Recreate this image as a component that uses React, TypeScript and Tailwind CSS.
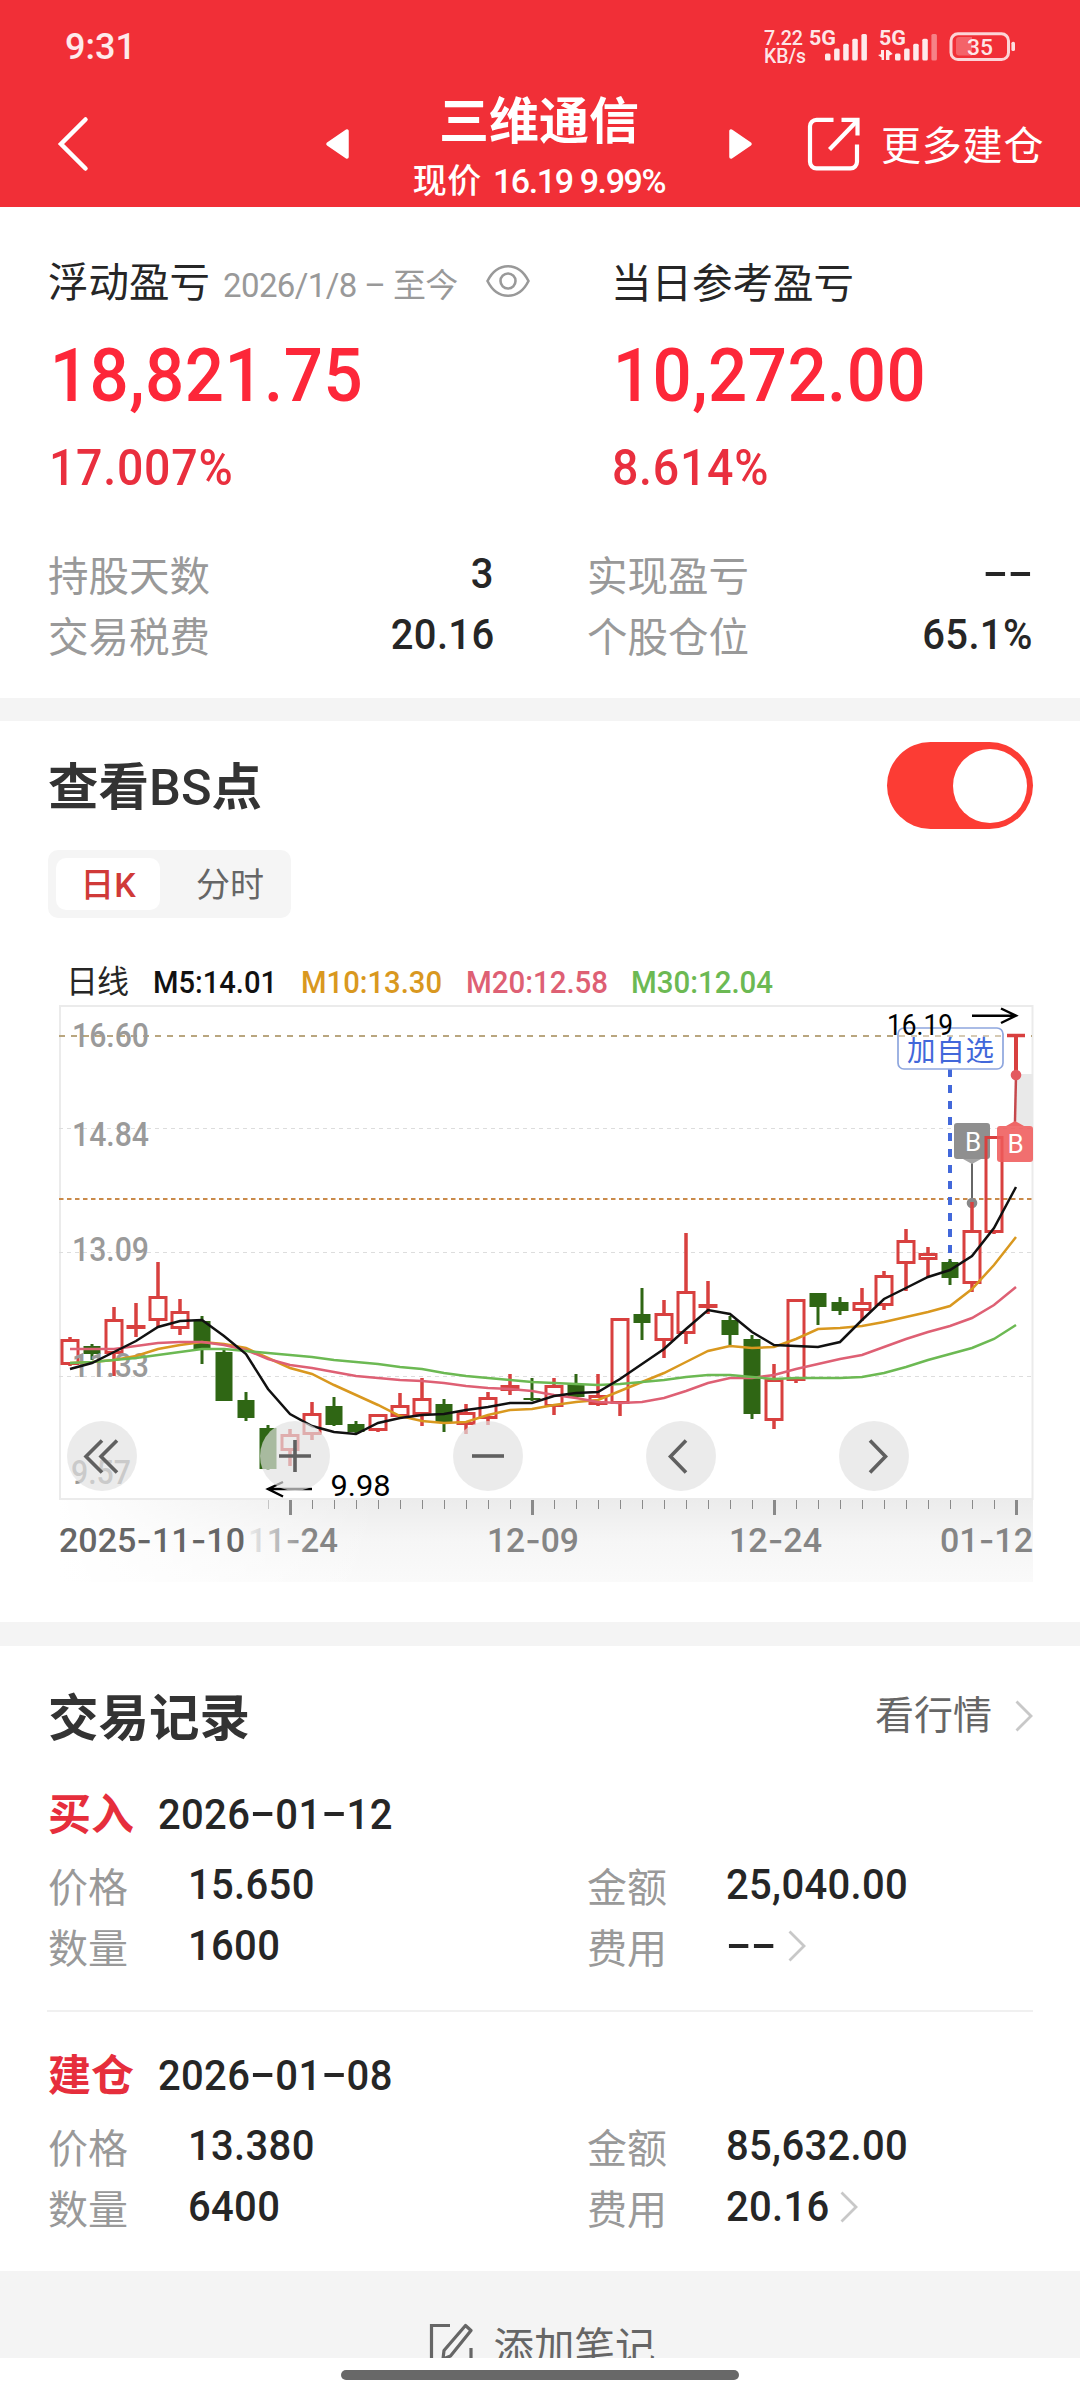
import { Fragment } from 'react';

type Candle = [up: number, high: number, top: number, bottom: number, low: number];

const X0 = 70;
const STEP = 22;

const candles: Candle[] = [
  [1, 1337, 1339, 1365, 1366],
  [0, 1344, 1346, 1354, 1360],
  [1, 1307, 1319, 1354, 1376],
  [1, 1303, 1325, 1329, 1337],
  [1, 1262, 1296, 1321, 1327],
  [1, 1299, 1311, 1329, 1335],
  [0, 1316, 1321, 1349, 1364],
  [0, 1350, 1352, 1401, 1401],
  [0, 1392, 1400, 1418, 1421],
  [0, 1425, 1428, 1469, 1470],
  [1, 1429, 1434, 1451, 1466],
  [1, 1402, 1413, 1435, 1440],
  [0, 1397, 1406, 1425, 1426],
  [0, 1421, 1424, 1432, 1434],
  [1, 1414, 1414, 1431, 1432],
  [1, 1393, 1405, 1417, 1417],
  [1, 1378, 1398, 1415, 1426],
  [0, 1399, 1404, 1422, 1432],
  [1, 1404, 1412, 1425, 1434],
  [1, 1392, 1397, 1419, 1425],
  [1, 1374, 1385, 1391, 1395],
  [0, 1378, 1398, 1400, 1401],
  [1, 1378, 1385, 1407, 1415],
  [0, 1374, 1384, 1397, 1397],
  [1, 1374, 1395, 1405, 1406],
  [1, 1318, 1318, 1404, 1416],
  [0, 1288, 1314, 1323, 1340],
  [1, 1300, 1313, 1341, 1358],
  [1, 1233, 1291, 1334, 1344],
  [1, 1281, 1304, 1308, 1314],
  [0, 1316, 1320, 1335, 1345],
  [0, 1335, 1339, 1414, 1419],
  [1, 1364, 1379, 1421, 1429],
  [1, 1299, 1299, 1381, 1383],
  [0, 1293, 1293, 1307, 1325],
  [0, 1297, 1302, 1311, 1315],
  [1, 1288, 1302, 1311, 1321],
  [1, 1271, 1275, 1306, 1310],
  [1, 1229, 1240, 1264, 1291],
  [1, 1247, 1253, 1260, 1277],
  [0, 1259, 1262, 1278, 1285],
  [1, 1202, 1230, 1284, 1292],
  [1, 1136, 1136, 1233, 1234],
];

const averages = [
  {
    label: 'M10:13.30',
    color: '#d9981f',
    x: 301,
    width: 141,
    points: [
      1363, 1362, 1360, 1356, 1349, 1345, 1342, 1344, 1348, 1358, 1368, 1374,
      1385, 1395, 1405, 1416, 1421, 1423, 1422, 1415, 1410, 1409, 1405, 1402,
      1400, 1391, 1382, 1373, 1362, 1351, 1346, 1348, 1347, 1339, 1329, 1328,
      1326, 1322, 1317, 1312, 1306, 1289, 1265, 1237,
    ],
  },
  {
    label: 'M20:12.58',
    color: '#de6074',
    x: 466,
    width: 142,
    points: [
      1349, 1349, 1349, 1346, 1343, 1342, 1342, 1345, 1350, 1359, 1365, 1368,
      1372, 1376, 1378, 1380, 1381, 1383, 1386, 1388, 1389, 1391, 1395, 1398,
      1402, 1403, 1402, 1398, 1391, 1383, 1378, 1378, 1375, 1369, 1364, 1359,
      1355, 1347, 1339, 1332, 1326, 1318, 1305, 1287,
    ],
  },
  {
    label: 'M30:12.04',
    color: '#6cb953',
    x: 631,
    width: 142,
    points: [
      1363, 1362, 1360, 1358, 1355, 1352, 1349, 1349, 1351, 1353, 1355, 1357,
      1360, 1362, 1364, 1367, 1369, 1373, 1376, 1378, 1380, 1382, 1383, 1384,
      1385, 1384, 1382, 1380, 1377, 1375, 1375, 1377, 1379, 1378, 1378, 1378,
      1377, 1373, 1367, 1360, 1354, 1348, 1339, 1325,
    ],
  },
  {
    label: 'M5:14.01',
    color: '#111111',
    x: 153,
    width: 124,
    points: [
      1369, 1363, 1352, 1341, 1327, 1321, 1320, 1336, 1354, 1389, 1414, 1426,
      1432, 1434, 1423, 1418, 1415, 1414, 1410, 1407, 1403, 1403, 1396, 1393,
      1392, 1379, 1364, 1349, 1329, 1310, 1314, 1332, 1345, 1346, 1347, 1342,
      1320, 1299, 1288, 1277, 1270, 1256, 1228, 1187,
    ],
  },
];

const priceLabels = [
  { text: '16.60', x: 72, y: 1047, width: 77 },
  { text: '14.84', x: 72, y: 1146, width: 77 },
  { text: '13.09', x: 72, y: 1261, width: 77 },
  { text: '11.33', x: 72, y: 1377, width: 77 },
  { text: '9.57', x: 71, y: 1484, width: 60 },
];

const dateLabels = [
  { text: '2025-11-10', x: 59, width: 186, fill: '#666666' },
  { text: '11-24', x: 248, width: 90, fill: 'url(#dateFade)' },
  { text: '12-09', x: 487, width: 92, fill: '#858585' },
  { text: '12-24', x: 729, width: 93, fill: '#858585' },
  { text: '01-12', x: 940, width: 93, fill: '#858585' },
];

const records = [
  {
    type: '买入',
    date: '2026-01-12',
    price: '15.650',
    amount: '25,040.00',
    count: '1600',
    fee: '--',
  },
  {
    type: '建仓',
    date: '2026-01-08',
    price: '13.380',
    amount: '85,632.00',
    count: '6400',
    fee: '20.16',
  },
];

// Condensed figures, with a wide dash that sits on the middle of the digits
const Num = ({ value, alignRight }: { value: string; alignRight?: boolean }) => (
  <span
    className={`inline-block scale-x-[0.93] font-medium tracking-[0.35px] whitespace-nowrap ${
      alignRight ? 'origin-right' : 'origin-left'
    }`}
  >
    {value.split(/(-)/).map((part, i) =>
      part === '-' ? (
        <span
          key={i}
          className="inline-block w-[27px] -translate-y-[2px] scale-x-[1.5] text-center font-['Inter'] tracking-normal"
        >
          -
        </span>
      ) : (
        <Fragment key={i}>{part}</Fragment>
      )
    )}
  </span>
);

const StatusIcons = () => (
  <svg
    width="260"
    height="40"
    viewBox="760 27 260 40"
    fill="#fff"
    fillOpacity="0.9"
  >
    <g fontSize="20" fontWeight="500">
      <text x="764" y="45" textLength="39" lengthAdjust="spacingAndGlyphs">
        7.22
      </text>
      <text x="764" y="63" textLength="42" lengthAdjust="spacingAndGlyphs">
        KB/s
      </text>
    </g>
    <g fontSize="20" fontWeight="700">
      <text x="809" y="45" textLength="27" lengthAdjust="spacingAndGlyphs">
        5G
      </text>
      <text x="879" y="45" textLength="27" lengthAdjust="spacingAndGlyphs">
        5G
      </text>
    </g>
    {[0, 1, 2, 3, 4].map((i) => (
      <rect
        key={i}
        x={825 + i * 9.1}
        y={53.5 - i * 4.9}
        width="5.5"
        height={7 + i * 4.9}
        rx="1.5"
      />
    ))}
    {[0, 1, 2, 3, 4].map((i) => (
      <rect
        key={i}
        x={895 + i * 9.1}
        y={53.5 - i * 4.9}
        width="5.5"
        height={7 + i * 4.9}
        rx="1.5"
        fillOpacity={i === 4 ? 0.4 : 0.9}
      />
    ))}
    <path d="M881 50h3v10h-2.4v-2.4l-3.6-2.6 3-.8z M886 50h2.4l4.4 4-3.4 1.4v4.6H886z" />
    <rect
      x="951"
      y="33.8"
      width="57.5"
      height="25.8"
      rx="7"
      fill="none"
      stroke="#fff"
      strokeOpacity="0.8"
      strokeWidth="3"
    />
    <path d="M959 37h13v18.500h-13a3 3 0 0 1-3-3v-12.500a3 3 0 0 1 3-3z" fillOpacity="0.25" />
    <rect x="1011.400" y="41.700" width="3.600" height="9.300" rx="1.600" fillOpacity="0.85" />
    <text
      x="967"
      y="55"
      fontSize="22"
      fontWeight="500"
      textLength="26"
      lengthAdjust="spacingAndGlyphs"
    >
      35
    </text>
  </svg>
);

const Chevron = () => (
  <svg width="18" height="32" viewBox="0 0 18 32" fill="none">
    <path d="M1.500 1.500 16 16 1.500 30.500" stroke="#c8c8c8" strokeWidth="2.800" />
  </svg>
);

const Header = () => (
  <header className="h-[207px] bg-[#f12f37] text-white">
    <div className="flex h-[94px] items-center justify-between pl-[65px] pr-[60px]">
      <span className="text-[36px] leading-none font-medium text-white/90">
        9:31
      </span>
      <StatusIcons />
    </div>
    <div className="flex h-[113px] items-center pb-[13px] pl-[56px]">
      <svg width="34" height="56" viewBox="0 0 34 56" fill="none">
        <path d="M29.500 3.500 5 28l24.500 24.500" stroke="#fff" strokeWidth="4.500" strokeLinecap="round" />
      </svg>
      <svg className="ml-[235px]" width="26" height="32" viewBox="0 0 26 32">
        <path d="M3 16 22 3v26z" fill="#fff" stroke="#fff" strokeWidth="3.500" strokeLinejoin="round" />
      </svg>
      <div className="ml-[37px] w-[302px] self-start text-center whitespace-nowrap">
        <div className="text-[50px] leading-[57px] font-bold">三维通信</div>
        <div className="mt-[8px] text-[34px] leading-[44px] font-medium tracking-[-1.4px]">
          <span className="mr-1 tracking-[0.5px]">现价</span> 16.19 9.99%
        </div>
      </div>
      <svg className="ml-[37px]" width="26" height="32" viewBox="0 0 26 32">
        <path d="M23 16 4 3v26z" fill="#fff" stroke="#fff" strokeWidth="3.500" strokeLinejoin="round" />
      </svg>
      <svg className="ml-[54px]" width="54" height="56" viewBox="0 0 54 56" fill="none" stroke="#fff" strokeWidth="4.200">
        <path d="M26.500 3.800H9.500a6.500 6.500 0 0 0-6.500 6.500v35.500a6.500 6.500 0 0 0 6.500 6.500h34a6.500 6.500 0 0 0 6.500-6.500V28.500" />
        <path d="M34.500 3.800H50.500V19.500" />
        <path d="M49 6 22.500 33.500" />
      </svg>
      <span className="mt-1.5 ml-[20px] text-[40px] leading-[50px] tracking-[0.8px] whitespace-nowrap">
        更多建仓
      </span>
    </div>
  </header>
);

const Stat = ({ label, value }: { label: string; value: string }) => (
  <div className="flex h-[61px] justify-between leading-[61px]">
    <span className="mt-1 text-[40.5px] text-[#999999]">{label}</span>
    <span className="text-[43px] text-[#262626]">
      <Num value={value} alignRight />
    </span>
  </div>
);

const Profit = ({ amount, percent }: { amount: string; percent: string }) => (
  <>
    <div className="mt-[14px] origin-left scale-x-[0.92] pl-[2px] text-[75px] leading-[90px] font-medium tracking-[0.5px] text-[#fd2739]">
      {amount}
    </div>
    <div className="mt-[18px] origin-left scale-x-[0.93] pl-[1px] text-[50px] leading-[60px] font-medium tracking-[0.8px] text-[#e92f3e]">
      {percent}
    </div>
  </>
);

const Summary = () => (
  <section className="h-[491px] bg-white px-[48px] pt-[46px]">
    <div className="flex">
      <div className="w-[563px]">
        <div className="flex h-[63px] items-center">
          <div className="flex w-[438px] items-baseline leading-[62px] whitespace-nowrap">
            <span className="text-[40.5px] text-[#262626]">浮动盈亏</span>
            <span className="ml-[13px] text-[33px] tracking-[-0.6px] text-[#999999]">
              2026/1/8 – 至今
            </span>
          </div>
          <svg className="mb-2" width="44" height="34" viewBox="0 0 44 34" fill="none" stroke="#999999" strokeWidth="2.600">
            <path d="M1.500 17C6 8 13 2.200 22 2.200S38 8 42.500 17C38 26 31 31.800 22 31.800S6 26 1.500 17z" />
            <circle cx="22" cy="17" r="7.500" />
          </svg>
        </div>
        <Profit amount="18,821.75" percent="17.007%" />
      </div>
      <div>
        <div className="h-[63px] text-[40.5px] leading-[62px] text-[#262626]">
          当日参考盈亏
        </div>
        <Profit amount="10,272.00" percent="8.614%" />
      </div>
    </div>
    <div className="mt-[45px] grid grid-cols-[446px_446px] gap-x-[93px]">
      <Stat label="持股天数" value="3" />
      <Stat label="实现盈亏" value="--" />
      <Stat label="交易税费" value="20.16" />
      <Stat label="个股仓位" value="65.1%" />
    </div>
  </section>
);

const KLineChart = () => (
  <svg className="mt-[22px] block" width="1080" height="650" viewBox="0 940 1080 650">
    <defs>
      <linearGradient id="axisShade" x1="0" y1="0" x2="0" y2="1">
        <stop offset="0" stopColor="#ececec" />
        <stop offset="0.5" stopColor="#f6f6f6" />
        <stop offset="1" stopColor="#fafafa" />
      </linearGradient>
      <linearGradient id="axisFade" x1="0" y1="0" x2="1" y2="0">
        <stop offset="0" stopColor="#fff" />
        <stop offset="1" stopColor="#fff" stopOpacity="0" />
      </linearGradient>
      <linearGradient id="dateFade" x1="0" y1="0" x2="1" y2="0">
        <stop offset="0" stopColor="#eeeeee" />
        <stop offset="0.35" stopColor="#b8b8b8" />
        <stop offset="0.7" stopColor="#858585" />
      </linearGradient>
    </defs>

    <text x="66" y="993" fontSize="32" fill="#262626" textLength="63">
      日线
    </text>
    {averages.map((ma) => (
      <text
        key={ma.label}
        x={ma.x}
        y="993"
        fontSize="32"
        fontWeight="500"
        fill={ma.color}
        textLength={ma.width}
        lengthAdjust="spacingAndGlyphs"
      >
        {ma.label}
      </text>
    ))}

    <rect x="60" y="1006" width="972.500" height="493" fill="none" stroke="#ebebeb" strokeWidth="2" />
    <path d="M59 1128.500H1032M59 1252.500H1032M59 1376.500H1032" stroke="#dddddd" strokeDasharray="4 4" />
    <path d="M59 1036H1032" stroke="#b9a67f" strokeWidth="2" strokeDasharray="6 6" />
    <path d="M59 1199H1032" stroke="#c98a4a" strokeWidth="2" strokeDasharray="4.500 3.500" />

    <rect x="60" y="1500" width="973" height="82" fill="url(#axisShade)" />
    <rect x="59" y="1500" width="320" height="83" fill="url(#axisFade)" />
    {Array.from({ length: 35 }, (_, i) => {
      const major = i % 11 === 1 || i === 34;
      return (
        <rect
          key={i}
          x={X0 + (i + 9) * STEP - (major ? 1 : 0)}
          y="1500"
          width={major ? 3 : 1}
          height={major ? 15 : 9}
          fill={i === 0 ? '#c4c4c4' : '#8a8a8a'}
        />
      );
    })}
    {dateLabels.map((d) => (
      <text
        key={d.text}
        x={d.x}
        y="1552"
        fontSize="34"
        fontWeight="500"
        fill={d.fill}
        textLength={d.width}
        lengthAdjust="spacingAndGlyphs"
      >
        {d.text.split(/(-)/).map((part, i) => (
          <tspan key={i} fontFamily={part === '-' ? 'Inter' : 'Roboto'}>
            {part}
          </tspan>
        ))}
      </text>
    ))}

    <path d="M950 1069V1262" stroke="#4268da" strokeWidth="4" strokeDasharray="8 8" />
    <rect x="1016.500" y="1074" width="16.500" height="52" fill="#e9e9e9" />
    <path d="M972 1162V1202" stroke="#666666" strokeWidth="2" />
    <circle cx="972" cy="1203" r="5.300" fill="#888888" />
    <rect x="954" y="1123" width="36" height="36" rx="3" fill="#8f8f8f" />
    <path d="M963 1159h18l-9 5z" fill="#a5a5a5" />
    <text x="965" y="1151" fontSize="26" fill="#fff">
      B
    </text>

    {candles.map(([up, high, top, bottom, low], i) => {
      const x = X0 + i * STEP;
      if (up) {
        return (
          <g key={i} stroke="#d8403f" strokeWidth="3" fill="none">
            <path d={`M${x} ${high}V${top + 1}M${x} ${bottom - 1}V${low}`} strokeWidth="3.500" />
            <rect x={x - 8} y={top + 1.5} width="16" height={Math.max(bottom - top - 3, 1)} />
          </g>
        );
      }
      return (
        <g key={i} fill="#2f6614">
          <rect x={x - 1.5} y={high} width="3" height={low - high} />
          <rect x={x - 8.5} y={top} width="17" height={bottom - top} />
        </g>
      );
    })}
    <path d="M1007 1035.500H1025" stroke="#d8403f" strokeWidth="3.500" />
    <path d="M1016 1036V1075" stroke="#d8403f" strokeWidth="4" />
    <path d="M1016 1075 1015 1122" stroke="#c5484c" strokeWidth="2.500" />

    {priceLabels.map((p) => (
      <text
        key={p.text}
        x={p.x}
        y={p.y}
        fontSize="34"
        fontWeight="500"
        fill="#9a9a9a"
        textLength={p.width}
        lengthAdjust="spacingAndGlyphs"
      >
        {p.text}
      </text>
    ))}

    {averages.map((ma) => (
      <polyline
        key={ma.label}
        points={ma.points.map((y, i) => `${X0 + i * STEP},${y}`).join(' ')}
        fill="none"
        stroke={ma.color}
        strokeWidth="2.500"
      />
    ))}

    <circle cx="1016" cy="1075" r="5.300" fill="#e35a60" />
    <path d="M1006 1126h18l-9-5z" fill="#ee6666" />
    <rect x="997" y="1126" width="36" height="36" rx="3" fill="#ef5a5a" fillOpacity="0.87" />
    <text x="1007.500" y="1153" fontSize="26" fill="#fff">
      B
    </text>

    <rect x="898" y="1028" width="105" height="41" rx="6" fill="#fff" fillOpacity="0.4" stroke="#8ea6de" strokeWidth="1.700" />
    <text x="907" y="1060.500" fontSize="28.500" fill="#4268da" textLength="87">
      加自选
    </text>
    <text x="887" y="1035" fontSize="29" fill="#000" textLength="66" lengthAdjust="spacingAndGlyphs">
      16.19
    </text>
    <path d="M972 1015.700H1015M1001 1008.500 1016 1015.700 1001 1023" fill="none" stroke="#000" strokeWidth="2.400" />
    <text x="330.500" y="1496" fontSize="30" fill="#000" textLength="60" lengthAdjust="spacingAndGlyphs">
      9.98
    </text>
    <path d="M312 1489H269M283 1482 268 1489 283 1496.500" fill="none" stroke="#000" strokeWidth="2.400" />

    {[102, 295, 488, 681, 874].map((cx) => (
      <circle key={cx} cx={cx} cy="1456" r="35" fill="#e1e1e1" fillOpacity="0.68" />
    ))}
    <g fill="none" stroke="#606060" strokeWidth="3.600">
      <path d="M102 1440.500 86 1456.500 102 1472.500M117 1440.500 101 1456.500 117 1472.500" />
      <path d="M279 1456H311M295 1440V1472" />
      <path d="M472 1456H504" />
      <path d="M686 1440.500 670.500 1456.500 686 1472.500" />
      <path d="M870 1440.500 885.500 1456.500 870 1472.500" />
    </g>
  </svg>
);

const BsSection = () => (
  <section className="h-[901px] bg-white pt-[21px]">
    <div className="flex h-[87px] items-center justify-between pr-[47px] pl-[48px]">
      <h2 className="mt-1 text-[50.5px] leading-[60px] font-bold text-[#333333]">
        查看<span className="font-medium">BS</span>点
      </h2>
      <div className="flex h-[87px] w-[146px] items-center justify-end rounded-full bg-[#fc3c34] pr-[6px]">
        <span className="size-[74px] rounded-full bg-white" />
      </div>
    </div>
    <div className="mt-[21px] ml-[48px] flex h-[68px] w-[243px] items-center rounded-[10px] bg-[#f5f5f5] pl-[8px] text-[34px] leading-[52px]">
      <div className="h-[52px] w-[104px] rounded-[10px] bg-white text-center font-medium text-[#d03a38]">
        <span className="relative top-px">日K</span>
      </div>
      <div className="ml-[36px] text-[#666666]">
        <span className="relative top-px">分时</span>
      </div>
    </div>
    <KLineChart />
  </section>
);

const Records = () => (
  <section className="bg-white px-[48px] pt-[40px]">
    <div className="flex h-[65px] items-center justify-between">
      <h2 className="text-[50.5px] leading-[64px] font-bold text-[#333333]">
        交易记录
      </h2>
      <div className="-mt-[5px] -mr-px flex items-center">
        <span className="mr-[23px] text-[39px] leading-[60px] text-[#666666]">
          看行情
        </span>
        <Chevron />
      </div>
    </div>
    {records.map((r, i) => (
      <div
        key={r.date}
        className={`-mx-px px-px pt-[32px] pb-[34px] ${
          i > 0 ? 'border-t-2 border-[#f0f0f0]' : ''
        }`}
      >
        <div className="flex h-[61px] leading-[60px]">
          <span className="mt-[2px] w-[110px] text-[43px] font-bold text-[#e62e3c]">
            {r.type}
          </span>
          <span className="text-[43px] text-[#262626]">
            <Num value={r.date} />
          </span>
        </div>
        <div className="mt-[10px] grid grid-cols-[140px_399px_139px_auto] text-[43px] leading-[61px] text-[#262626]">
          <Label>价格</Label>
          <Num value={r.price} />
          <Label>金额</Label>
          <Num value={r.amount} />
          <Label>数量</Label>
          <Num value={r.count} />
          <Label>费用</Label>
          <div className="flex h-[61px] items-center">
            <span className={r.fee === '--' ? 'mr-[8px]' : 'mr-[3px]'}>
              <Num value={r.fee} />
            </span>
            <Chevron />
          </div>
        </div>
      </div>
    ))}
  </section>
);

const Label = ({ children }: { children: string }) => (
  <span className="mt-1 -mb-1 text-[40px] text-[#999999]">{children}</span>
);

const App = () => {
  return (
    <div className="h-[2400px] w-[1080px] overflow-hidden bg-[#f4f4f4] font-['Roboto','Noto_Sans_CJK_SC',sans-serif]">
      <Header />
      <Summary />
      <div className="h-[23px]" />
      <BsSection />
      <div className="h-[24px]" />
      <Records />
      <div className="flex h-[87px] justify-center overflow-hidden pt-[47px] pl-[2px]">
        <svg className="mt-[4px]" width="48" height="48" viewBox="0 0 48 48" fill="none" stroke="#666666" strokeWidth="3.200">
          <path d="M23 3.500H4.500V45H44V26" />
          <path d="M38.500 3.500 44 8.500 23.500 34l-7.500 3 1-8.500z" strokeLinejoin="round" />
        </svg>
        <span className="ml-[19px] text-[40.5px] leading-[60px] text-[#666666]">
          添加笔记
        </span>
      </div>
      <div className="flex h-[42px] justify-center bg-white pt-[12px]">
        <div className="h-[10px] w-[398px] rounded-full bg-[#686868]" />
      </div>
    </div>
  );
};

export default App;
